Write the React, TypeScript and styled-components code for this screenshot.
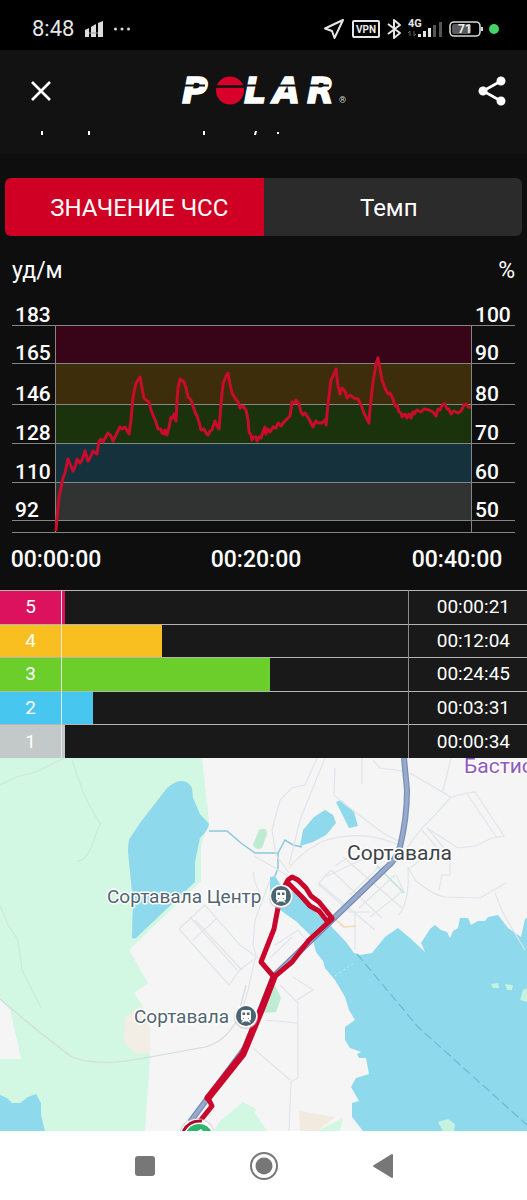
import React, { useState } from "react";
import styled, { createGlobalStyle } from "styled-components";

const GlobalStyle = createGlobalStyle`
  *, *::before, *::after { box-sizing: border-box; }
  body {
    margin: 0;
    background: #0e0e0e;
    color: #fff;
    font-family: Roboto, "Liberation Sans", sans-serif;
  }
  button { font: inherit; color: inherit; border: 0; padding: 0; background: none; cursor: pointer; }
`;

const Screen = styled.main`
  display: flex;
  flex-direction: column;
  min-height: 100vh;
`;

const StatusBar = styled.div`
  display: flex;
  align-items: center;
  justify-content: space-between;
  height: 50px;
  padding: 7px 28px 0 32px;
  background: #000;
  color: #e6e6e6;
`;

const StatusGroup = styled.div<{ $gap: number }>`
  display: flex;
  align-items: center;
  gap: ${(p) => p.$gap}px;
`;

const Clock = styled.span`
  font-size: 22px;
  line-height: 28px;
`;

const Header = styled.header`
  background: #121212;
  height: 104px;
`;

const HeaderRow = styled.div`
  display: grid;
  grid-template-columns: 80px 1fr 80px;
  align-items: center;
  height: 81px;
`;

const IconButton = styled.button<{ $side: "left" | "right" }>`
  display: flex;
  justify-content: ${(p) => (p.$side === "left" ? "flex-start" : "flex-end")};
  padding: ${(p) => (p.$side === "left" ? "0 0 0 30px" : "0 20px 0 0")};
`;

const Logo = styled.svg`
  display: block;
  justify-self: center;
`;

const ScrolledTitle = styled.svg`
  display: block;
  margin-left: 40px;
`;

const Tabs = styled.div`
  display: grid;
  grid-template-columns: 1fr 1fr;
  margin: 24px 5px 0;
  height: 58px;
  border-radius: 6px;
  overflow: hidden;
`;

const Tab = styled.button<{ $active: boolean }>`
  font-size: 24px;
  line-height: 28px;
  padding-top: 2px;
  padding-left: ${(p) => (p.$active ? "10px" : "0")};
  padding-right: ${(p) => (p.$active ? "0" : "8px")};
  background: ${(p) => (p.$active ? "#d00024" : "#2b2b2b")};
`;

const Units = styled.div`
  display: flex;
  justify-content: space-between;
  padding: 21px 12px 15px;
  font-size: 23px;
  line-height: 28px;
`;

const Chart = styled.svg`
  display: block;
  width: 100%;
  height: auto;
`;

const ZoneTable = styled.table`
  width: 100%;
  height: 168px;
  table-layout: fixed;
  border-collapse: separate;
  border-spacing: 0;
  font-size: 19px;
  line-height: 24px;
  background: #191919;
`;

const ZoneRow = styled.tr`
  th, td { padding: 0; border-top: 1px solid #b4b4b4; }
`;

const ZoneIndex = styled.th<{ $color: string }>`
  width: 62px;
  font-weight: 400;
  background: ${(p) => p.$color};
  border-right: 1px solid #e4e4e4;
`;

const ZoneTrack = styled.td<{ $color: string; $share: number }>`
  background: linear-gradient(to right, ${(p) => `${p.$color} ${p.$share}%, transparent ${p.$share}%`});
`;

const ZoneTime = styled.td`
  width: 119px;
  border-left: 1px solid #8a8a8a;
  text-align: right;

  && { padding-right: 17px; }
`;

const MapView = styled.svg`
  display: block;
  width: 100%;
  height: auto;
  background: #f5f5f5;
`;

const NavBar = styled.nav`
  flex: 1;
  display: flex;
  align-items: center;
  justify-content: center;
  gap: 89px;
  min-height: 69px;
  background: #fff;
`;

const NavButton = styled.button`
  display: flex;
  justify-content: center;
  width: 30px;
`;

const gridLines = [
  { y: 25, bpm: "183", pct: "100" },
  { y: 63, bpm: "165", pct: "90" },
  { y: 104, bpm: "146", pct: "80" },
  { y: 143, bpm: "128", pct: "70" },
  { y: 182, bpm: "110", pct: "60" },
  { y: 220, bpm: "92", pct: "50" },
];

const bandColors = ["#380418", "#3d2d0a", "#1a330d", "#14313c", "#313333"];

const heartRate =
  "56,231 57,218 59,197 61,188 63,178 65,173 68,159 70,164 73,171 75,167 77,159 80,163 82,160 85,151 88,161 90,158 93,151 97,154 99,141 101,139 103,142 108,133 111,136 113,141 117,133 120,127 122,129 125,127 129,134 131,120 133,97 136,83 140,77 142,88 144,98 146,100 149,102 151,110 153,115 156,122 158,129 161,129 162,133 164,134 165,130 167,135 169,127 171,117 173,118 174,114 176,121 177,101 178,88 180,79 184,82 186,88 188,97 191,100 193,106 195,112 197,116 199,122 201,130 204,129 206,133 208,135 210,131 212,130 215,121 217,126 219,129 221,104 223,84 226,76 228,73 230,84 232,93 235,98 238,102 240,108 243,106 246,110 248,120 249,132 251,135 252,140 254,137 256,137 257,141 259,137 261,138 263,132 265,127 266,134 268,129 270,132 273,127 276,128 278,123 281,126 284,122 288,118 290,116 292,102 295,103 296,100 299,104 301,112 303,115 305,113 309,119 311,123 313,127 316,121 318,123 322,123 325,120 326,125 328,104 331,80 333,76 336,69 338,86 340,94 342,88 345,91 347,98 350,95 354,98 358,99 361,105 364,113 367,119 369,123 370,109 373,82 376,64 378,58 380,69 382,80 385,88 388,94 390,93 393,99 395,106 397,105 399,112 401,113 402,117 405,114 407,118 409,114 411,118 413,112 414,114 417,110 421,112 424,109 429,110 433,112 436,116 438,109 440,110 442,105 445,104 447,109 449,109 451,114 454,111 458,113 461,111 464,105 466,104 468,107 471,107";

const zones = [
  { id: 5, color: "#dd125e", share: 1, time: "00:00:21" },
  { id: 4, color: "#f9be20", share: 29, time: "00:12:04" },
  { id: 3, color: "#6bce2b", share: 60, time: "00:24:45" },
  { id: 2, color: "#47c7ef", share: 9, time: "00:03:31" },
  { id: 1, color: "#c2c9c8", share: 1, time: "00:00:34" },
];

function StatusIcons() {
  return (
    <StatusGroup $gap={6}>
      <svg width="22" height="22" viewBox="0 0 22 22" fill="none" stroke="#e6e6e6" strokeWidth="2" strokeLinejoin="round">
        <path d="M20 2 2 10.5 9 13 11.5 20Z" />
      </svg>
      <svg width="29" height="20" viewBox="0 0 29 20">
        <rect x="2" y="2" width="26" height="16" rx="1" fill="none" stroke="#e6e6e6" strokeWidth="2" />
        <text x="15" y="14" textAnchor="middle" fontSize="10" fontWeight="700" fill="#e6e6e6">VPN</text>
      </svg>
      <svg width="16" height="22" viewBox="0 0 16 22" fill="none" stroke="#e6e6e6" strokeWidth="2" strokeLinejoin="round">
        <path d="m2 6 12 9-6 5V2l6 5-12 9" />
      </svg>
      <svg width="35" height="24" viewBox="0 -2 35 24" fill="#e6e6e6">
        <text x="0" y="8" fontSize="11" fontWeight="700">4G</text>
        <path d="M2 12v5M0 14l2-2M6 17v-5M8 15l-2 2" stroke="#666" fill="none" />
        <path d="M10 15h3v3h-3zM15 12h3v6h-3zM20 9h3v9h-3z" />
        <path d="M25 6h3v12h-3zM31 3h3v15h-3z" fill="#555" />
      </svg>
      <svg width="34" height="18" viewBox="0 0 34 18">
        <rect x="1" y="2" width="30" height="14" rx="4" fill="none" stroke="#d8d8d8" strokeWidth="1.6" />
        <rect x="3" y="4" width="19" height="10" rx="2" fill="#5a5a5a" />
        <path d="M33 7v4" stroke="#d8d8d8" strokeWidth="2" />
        <text x="16" y="13" textAnchor="middle" fontSize="12" fontWeight="700" fill="#f0f0f0">71</text>
      </svg>
      <svg width="10" height="10" viewBox="0 0 10 10">
        <circle cx="5" cy="5" r="5" fill="#43d366" />
      </svg>
    </StatusGroup>
  );
}

function PolarLogo() {
  return (
    <Logo width="168" height="56" viewBox="0 -12 168 56" role="img" aria-label="Polar">
      <g fill="#fff" stroke="#fff" strokeWidth="1.500" fontFamily='"DejaVu Sans"' fontWeight="700" fontStyle="oblique" fontSize="35">
        <text x="2" y="28">P</text>
        <text x="64" y="28">L</text>
        <text x="93" y="28">A</text>
        <text x="127" y="28">R</text>
      </g>
      <path d="M0 10.5h25M64 10.5h22M94 10.5h28M126 10.5h23" stroke="#121212" strokeWidth="2" />
      <circle cx="50" cy="15.5" r="14" fill="#d6002a" />
      <path d="M36 11.5h28" stroke="#121212" strokeWidth="2.600" />
      <text x="159" y="28" fontSize="9" fill="#ccc">®</text>
    </Logo>
  );
}

function HeartRateChart() {
  return (
    <Chart viewBox="0 0 527 290" role="img" aria-label="ЧСС">
      {bandColors.map((color, i) => (
        <rect key={color} x="56" width="415" y={gridLines[i].y} height={gridLines[i + 1].y - gridLines[i].y} fill={color} />
      ))}
      <g stroke="#858585" strokeWidth="1" shapeRendering="crispEdges">
        {gridLines.map((line) => (
          <path key={line.y} d={`M12 ${line.y}.5H515`} />
        ))}
        <path d="M12 232.5H515M55.5 25V232M471.5 25V232" />
      </g>
      <g fill="#fff" fontSize="21" fontWeight="500">
        {gridLines.map((line) => (
          <React.Fragment key={line.y}>
            <text x="15" y={line.y - 3}>{line.bpm}</text>
            <text x="475" y={line.y - 3}>{line.pct}</text>
          </React.Fragment>
        ))}
      </g>
      <g fill="#fff" fontSize="23" fontWeight="500" textAnchor="middle">
        <text x="56" y="267">00:00:00</text>
        <text x="256" y="267">00:20:00</text>
        <text x="457" y="267">00:40:00</text>
      </g>
      <polyline points={heartRate} fill="none" stroke="#c90c2b" strokeWidth="3" strokeLinejoin="round" />
    </Chart>
  );
}

function StationPin({ x, y }: { x: number; y: number }) {
  return (
    <g transform={`translate(${x} ${y})`}>
      <circle r="12" fill="#bbb" cy="1" opacity=".6" />
      <circle r="11.5" fill="#fff" />
      <circle r="10" fill="#4b6472" />
      <path d="M-3-6h6q2 0 2 2v7q0 1.500-2 1.500l2 2h-2l-1-1h-4l-1 1h-2l2-2q-2 0-2-1.500v-7q0-2 2-2z" fill="#fff" />
      <path d="M-3.500-3.500h2.600v2.600h-2.600zM.9-3.500h2.600v2.600h-2.600zM-3 2h1.200v.8h-1.200zM1.800 2h1.200v.8h-1.200z" fill="#4b6472" />
    </g>
  );
}

function RouteMap() {
  return (
    <MapView viewBox="0 758 527 373" role="img" aria-label="Сортавала">
      <path fill="#d2f7e2" d="M0 758H202L209 822 201 845V881L129 950 148 983 134 993 142 1005 150 1028V1057L145 1131H0V1059H21L10 1010 0 1000Z" />
      <path fill="#f5f5f5" d="M0 1000 10 1010 21 1059H0Z" />
      <path fill="#f3eee5" d="M142 1005 134 1011 125 1018 124 1042 136 1054 150 1053V1028Z" />
      <path fill="#8fd9ed" d="M180 781Q188 780 192 788L193 798 200 814 209 824Q209 829 200 838L195 862V882L136 938Q131 940 132 934L133 902 130 872 128 852Q128 841 130 838L140 823 167 788Q174 782 180 781Z" />
      <path fill="#8fd9ed" d="M0 1095 7 1098 12 1103 20 1103 28 1097 36 1094 41 1103V1115L45 1131H0Z" />
      <path
        fill="#8fd9ed"
        d="M270 877 275 876 280 884 300 896 313 910 330 925 346 942 354 953 360 955 372 953 385 937 398 928 410 938 425 952 421 943 430 929 435 925 441 930 447 932 450 938 453 931 458 928 460 918 468 918 471 925 478 921 485 921 488 917 498 915 508 928 521 937 525 919 527 918V1131H363L352 1117V1103L359 1101 351 1087 356 1078 369 1074 366 1058 359 1058 357 1054 361 1052 350 1048 345 1040 345 1027 355 1020 349 1010 345 997 335 980 325 968 323 961 316 952 312 937 303 928 297 922 280 910 270 896Z"
      />
      <path fill="#8fd9ed" d="M300 846 303 830 314 817 325 810 333 815 336 823 326 835 313 842ZM336 802 341 800 354 812 358 826 349 828Z" />
      <path fill="none" stroke="#8cc8da" strokeWidth="1.500" d="M209 831H227L241 843 255 853H278L285 840 293 845 302 847M278 853V868L275 876" />
      <path fill="#bdecd3" d="M259 830Q267 826 267 834L262 848Q256 851 253 845ZM274 983 281 998 276 1012 263 1013Z" />
      <path fill="#d2f7e2" d="M214 1131 220 1121 243 1102 256 1109 255 1113 267 1131ZM317 1131 343 1118 340 1131Z" />
      <path fill="#f3eadf" d="M299 1111 335 1117 317 1131H300Z" />
      <path fill="#c6f3df" d="M438 1122 448 1119 455 1124 454 1131H443ZM491 984 498 983 499 988 493 988ZM505 984 513 985 512 990 507 990ZM520 1000 523 990 527 988V1002Z" />

      <g fill="none" stroke="#e1e4e9" strokeWidth="1.200">
        <g stroke="#c9e9dc">
          <path d="M0 785 16 777 36 772 64 758M72 760 84 795 100 824 90 850Q85 861 77 861M0 905 8 925 18 940 22 970 41 1008" />
        </g>
        <path d="M317 758 305 785 292 788 280 800 272 830 276 855 289 873M325 758 300 820 289 865M335 768 334 795 342 802 383 833 400 842M362 758V784M373 760 380 768 402 771M410 773 451 797 467 793 475 792 504 836 492 838 475 846 458 848 427 828M467 794 497 838M451 797 435 815 422 828 405 850M451 758 443 791" />
        <path d="M254 856 270 865 288 876M254 872Q252 878 260 893M289 868Q298 855 321 842 360 828 399 845M408 867Q410 900 399 915M408 867 415 880Q433 895 445 897L480 898 506 883M495 893 504 915 525 950" />
        <path d="M343 857 402 908M331 870 382 918M319 883 375 930M335 866 347 858M323 878 365 858M331 870 319 883M338 915 405 850M350 895 380 866M359 908 395 875M370 917 404 890M396 875 404 892M318 884 350 912H370M427 828 450 855V875H442L439 890M355 912V950M422 830 437 848 410 868" />
        <path d="M179 929 205 905 240 945 265 963M179 929 229 985 240 970 253 960M190 917 237 970M195 920 242 970M193 940 217 918M270 880 255 920 253 945 256 955 248 990 241 1015M275 945 298 930 310 945M270 958 292 937M280 985 298 1003V1078L291 1082 289 1131M293 977 313 990 297 1000M265 1020 297 1023M253 1048 290 1080" />
      </g>
      <path fill="none" stroke="#d3dcda" strokeWidth="1.200" d="M0 999 32 1026 70 1056Q95 1068 150 1057L205 1047Q225 1042 237 1020L246 985" />
      <path fill="none" stroke="#cae7dd" strokeWidth="2" d="M377 866 404 893" />
      <path fill="none" stroke="#f2e0c5" strokeWidth="2" d="M335 919 344 927 356 926" />
      <path fill="none" stroke="#68bed2" strokeWidth="1.300" strokeDasharray="9 4" d="M357 954 418 1027 527 1125" />
      <path fill="none" stroke="#d3f1f8" strokeDasharray="2 3" d="M335 976 354 963" />

      <g fill="none" strokeLinejoin="round">
        <path stroke="#778db3" strokeWidth="6" d="M404 758 407 790Q407 818 400 847 396 860 386 868L332 920 274 976 245 1048 190 1122" />
        <path stroke="#97aacc" strokeWidth="3.600" d="M404 758 407 790Q407 818 400 847 396 860 386 868L332 920 274 976 245 1048 190 1122" />
      </g>
      <g fill="none" stroke="#c9062c" strokeLinejoin="round" strokeLinecap="round">
        <path strokeWidth="5" d="M281 893 288 880 292 877 298 880 306 888 311 896 319 902 332 918 327 921 319 911 310 906 302 897 288 883M280 897 274 929 261 962 274 977 292 962 309 940 332 919" />
        <path strokeWidth="7" d="M274 977 262 1008 243 1054 208 1098" />
        <path strokeWidth="5" d="M208 1098 212 1106 200 1121" />
      </g>
      <circle cx="197" cy="1136" r="18" fill="#bbb" opacity=".6" />
      <circle cx="197" cy="1136" r="17" fill="#fff" />
      <path d="M183 1132Q188 1120 202 1121" stroke="#b10b2b" strokeWidth="3" fill="none" />
      <circle cx="199" cy="1138" r="14" fill="#2fb56a" />
      <path d="m196 1132 5-3 2 2v2z" fill="#fff" />

      <g fontSize="19" fill="#526571" stroke="#fff" strokeWidth="3" strokeLinejoin="round" paintOrder="stroke">
        <text x="107" y="903">Сортавала Центр</text>
        <text x="134" y="1023">Сортавала</text>
        <text x="347" y="860" fontSize="21" fill="#3e4448">Сортавала</text>
        <text x="464" y="773" fontSize="21" fill="#9059bd">Бастио</text>
      </g>
      <StationPin x={281} y={896} />
      <StationPin x={246} y={1016} />
    </MapView>
  );
}

export default function App() {
  const [tab, setTab] = useState("hr");

  return (
    <Screen>
      <GlobalStyle />
      <StatusBar>
        <StatusGroup $gap={11}>
          <Clock>8:48</Clock>
          <svg width="18" height="16" viewBox="0 0 18 16" fill="#dcdcdc">
            <path d="M0 9 4 7V16H0zM6 6 11 3V16H6zM13 2 18 0V16H13z" />
            <path d="M4 12h9" stroke="#999" />
          </svg>
          <svg width="16" height="4" viewBox="0 0 16 4" fill="#dcdcdc">
            <circle cx="1.500" cy="2" r="1.500" />
            <circle cx="8" cy="2" r="1.500" />
            <circle cx="14.500" cy="2" r="1.500" />
          </svg>
        </StatusGroup>
        <StatusIcons />
      </StatusBar>

      <Header>
        <HeaderRow>
          <IconButton $side="left" aria-label="Закрыть">
            <svg width="22" height="22" viewBox="0 0 22 22" stroke="#fff" strokeWidth="2.600">
              <path d="m2 2 18 18M20 2 2 20" />
            </svg>
          </IconButton>
          <PolarLogo />
          <IconButton $side="right" aria-label="Поделиться">
            <svg width="30" height="30" viewBox="0 0 30 30" fill="#fff" stroke="#fff" strokeWidth="2.600">
              <path d="M24 5 6 15l18 10" fill="none" />
              <circle cx="24" cy="5" r="3.200" />
              <circle cx="6" cy="15" r="3.200" />
              <circle cx="24" cy="25" r="3.200" />
            </svg>
          </IconButton>
        </HeaderRow>
        <ScrolledTitle width="250" height="8" viewBox="0 0 250 8" fill="#fff" aria-hidden="true">
          <path d="M1 0h2v4H1zM48 0h2v4h-2zM163 0h2v4h-2zM215 0h2l-1 4h-2zM237 1h2v2h-2z" />
        </ScrolledTitle>
      </Header>

      <Tabs role="tablist">
        <Tab role="tab" aria-selected={tab === "hr"} $active={tab === "hr"} onClick={() => setTab("hr")}>
          ЗНАЧЕНИЕ ЧСС
        </Tab>
        <Tab role="tab" aria-selected={tab === "pace"} $active={tab === "pace"} onClick={() => setTab("pace")}>
          Темп
        </Tab>
      </Tabs>

      <Units>
        <span>уд/м</span>
        <span>%</span>
      </Units>
      <HeartRateChart />

      <ZoneTable>
        <tbody>
          {zones.map((zone) => (
            <ZoneRow key={zone.id}>
              <ZoneIndex scope="row" $color={zone.color}>{zone.id}</ZoneIndex>
              <ZoneTrack $color={zone.color} $share={zone.share} />
              <ZoneTime>{zone.time}</ZoneTime>
            </ZoneRow>
          ))}
        </tbody>
      </ZoneTable>

      <RouteMap />

      <NavBar>
        <NavButton aria-label="Недавние">
          <svg width="22" height="22" viewBox="0 0 22 22">
            <rect x="1" y="1" width="20" height="20" rx="3" fill="#777" />
          </svg>
        </NavButton>
        <NavButton aria-label="Домой">
          <svg width="30" height="30" viewBox="0 0 30 30">
            <circle cx="15" cy="15" r="13" fill="none" stroke="#777" strokeWidth="2" />
            <circle cx="15" cy="15" r="8.500" fill="#777" />
          </svg>
        </NavButton>
        <NavButton aria-label="Назад">
          <svg width="22" height="26" viewBox="0 0 22 26">
            <path d="M2 13 20 2V24Z" fill="#777" stroke="#777" strokeLinejoin="round" strokeWidth="2" />
          </svg>
        </NavButton>
      </NavBar>
    </Screen>
  );
}
